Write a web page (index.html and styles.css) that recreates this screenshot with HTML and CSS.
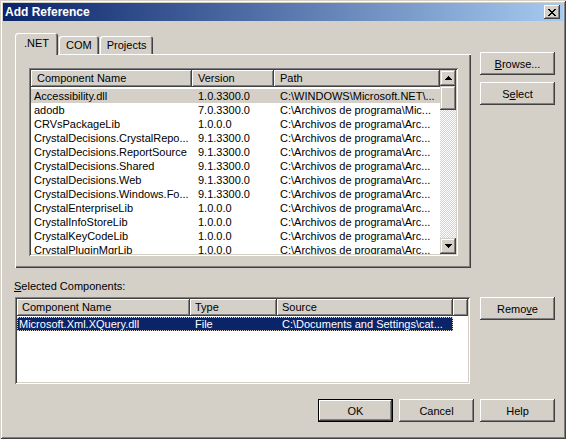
FILE: index.html
```html
<!DOCTYPE html>
<html lang="en">
<head>
    <meta charset="UTF-8">
    <title>Add Reference</title>
    <link rel="stylesheet" href="styles.css">
</head>
<body>
    <div class="window">
        <div class="titlebar">
            <span class="title">Add Reference</span>
            <span class="close-btn">
                <svg width="8" height="7" viewBox="0 0 8 7" shape-rendering="crispEdges">
                    <path d="M0 0h2v1h-2zM6 0h2v1h-2zM1 1h2v1h-2zM5 1h2v1h-2zM2 2h4v1h-4zM3 3h2v1h-2zM2 4h4v1h-4zM1 5h2v1h-2zM5 5h2v1h-2zM0 6h2v1h-2zM6 6h2v1h-2z" fill="#000"/>
                </svg>
            </span>
        </div>
        <div class="content">
            <div class="section">
                <div class="left">
                    <div class="tabs">
                        <div class="tab active">.NET</div>
                        <div class="tab">COM</div>
                        <div class="tab">Projects</div>
                    </div>
                    <div class="tab-panel">
                        <div class="listbox list-ref">
                            <div class="list-main">
                                <div class="list-header">
                                    <div class="col-h w-name">Component Name</div>
                                    <div class="col-h w-ver">Version</div>
                                    <div class="col-h w-path">Path</div>
                                </div>
                                <div class="list-rows">
                                    <div class="list-row hilite">
                                        <div class="cell w-name first">Accessibility.dll</div>
                                        <div class="cell w-ver">1.0.3300.0</div>
                                        <div class="cell w-path">C:\WINDOWS\Microsoft.NET\...</div>
                                    </div>
                                    <div class="list-row">
                                        <div class="cell w-name first">adodb</div>
                                        <div class="cell w-ver">7.0.3300.0</div>
                                        <div class="cell w-path">C:\Archivos de programa\Mic...</div>
                                    </div>
                                    <div class="list-row">
                                        <div class="cell w-name first">CRVsPackageLib</div>
                                        <div class="cell w-ver">1.0.0.0</div>
                                        <div class="cell w-path">C:\Archivos de programa\Arc...</div>
                                    </div>
                                    <div class="list-row">
                                        <div class="cell w-name first">CrystalDecisions.CrystalRepo...</div>
                                        <div class="cell w-ver">9.1.3300.0</div>
                                        <div class="cell w-path">C:\Archivos de programa\Arc...</div>
                                    </div>
                                    <div class="list-row">
                                        <div class="cell w-name first">CrystalDecisions.ReportSource</div>
                                        <div class="cell w-ver">9.1.3300.0</div>
                                        <div class="cell w-path">C:\Archivos de programa\Arc...</div>
                                    </div>
                                    <div class="list-row">
                                        <div class="cell w-name first">CrystalDecisions.Shared</div>
                                        <div class="cell w-ver">9.1.3300.0</div>
                                        <div class="cell w-path">C:\Archivos de programa\Arc...</div>
                                    </div>
                                    <div class="list-row">
                                        <div class="cell w-name first">CrystalDecisions.Web</div>
                                        <div class="cell w-ver">9.1.3300.0</div>
                                        <div class="cell w-path">C:\Archivos de programa\Arc...</div>
                                    </div>
                                    <div class="list-row">
                                        <div class="cell w-name first">CrystalDecisions.Windows.Fo...</div>
                                        <div class="cell w-ver">9.1.3300.0</div>
                                        <div class="cell w-path">C:\Archivos de programa\Arc...</div>
                                    </div>
                                    <div class="list-row">
                                        <div class="cell w-name first">CrystalEnterpriseLib</div>
                                        <div class="cell w-ver">1.0.0.0</div>
                                        <div class="cell w-path">C:\Archivos de programa\Arc...</div>
                                    </div>
                                    <div class="list-row">
                                        <div class="cell w-name first">CrystalInfoStoreLib</div>
                                        <div class="cell w-ver">1.0.0.0</div>
                                        <div class="cell w-path">C:\Archivos de programa\Arc...</div>
                                    </div>
                                    <div class="list-row">
                                        <div class="cell w-name first">CrystalKeyCodeLib</div>
                                        <div class="cell w-ver">1.0.0.0</div>
                                        <div class="cell w-path">C:\Archivos de programa\Arc...</div>
                                    </div>
                                    <div class="list-row">
                                        <div class="cell w-name first">CrystalPluginMgrLib</div>
                                        <div class="cell w-ver">1.0.0.0</div>
                                        <div class="cell w-path">C:\Archivos de programa\Arc...</div>
                                    </div>
                                </div>
                            </div>
                            <div class="vscroll">
                                <div class="sb-btn">
                                    <svg width="7" height="4" viewBox="0 0 7 4" shape-rendering="crispEdges"><path d="M3 0h1v1h1v1h1v1h1v1h-7v-1h1v-1h1v-1h1z" fill="#000"/></svg>
                                </div>
                                <div class="sb-thumb"></div>
                                <div class="sb-track"></div>
                                <div class="sb-btn">
                                    <svg width="7" height="4" viewBox="0 0 7 4" shape-rendering="crispEdges"><path d="M0 0h7v1h-1v1h-1v1h-1v1h-1v-1h-1v-1h-1v-1h-1z" fill="#000"/></svg>
                                </div>
                            </div>
                        </div>
                    </div>
                </div>
                <div class="side side-top">
                    <button class="btn"><u>B</u>rowse...</button>
                    <button class="btn">S<u>e</u>lect</button>
                </div>
            </div>

            <div class="section section-bottom">
                <div class="left">
                    <div class="field-label"><u>S</u>elected Components:</div>
                    <div class="listbox list-sel">
                        <div class="list-header">
                            <div class="col-h w-sname">Component Name</div>
                            <div class="col-h w-type">Type</div>
                            <div class="col-h w-src">Source</div>
                            <div class="col-h w-rest"></div>
                        </div>
                        <div class="list-row selected">
                            <div class="cell w-sname first">Microsoft.Xml.XQuery.dll</div>
                            <div class="cell w-type">File</div>
                            <div class="cell w-src">C:\Documents and Settings\cat...</div>
                        </div>
                    </div>
                </div>
                <div class="side side-bottom">
                    <button class="btn">Remo<u>v</u>e</button>
                </div>
            </div>

            <div class="footer">
                <button class="btn default">OK</button>
                <button class="btn">Cancel</button>
                <button class="btn">Help</button>
            </div>
        </div>
    </div>
</body>
</html>
```

FILE: styles.css
```css
body {
    margin: 0;
    background-color: #d4d0c8;
    font-family: "Liberation Sans", Arial, sans-serif;
    font-size: 11px;
    color: #000;
}
.window {
    width: 566px;
    height: 439px;
    box-sizing: border-box;
    padding: 3px;
    background: #d4d0c8;
    box-shadow: inset 1px 1px #d4d0c8, inset -1px -1px #404040, inset 2px 2px #fff, inset -2px -2px #808080;
}
.titlebar {
    height: 18px;
    display: flex;
    align-items: center;
    justify-content: space-between;
    padding: 0 3px 0 2px;
    background: linear-gradient(to right, #0a246a, #a6caf0);
    color: #fff;
}
.title {
    font-weight: bold;
    font-size: 12px;
}
.close-btn {
    width: 16px;
    height: 14px;
    box-sizing: border-box;
    display: flex;
    align-items: center;
    justify-content: center;
    background: #d4d0c8;
    box-shadow: inset -1px -1px #404040, inset 1px 1px #fff, inset -2px -2px #808080;
}
.content {
    padding: 12px 8px 0 12px;
}
.section {
    display: flex;
    gap: 9px;
}
.left {
    width: 456px;
}
.side {
    width: 75px;
    display: flex;
    flex-direction: column;
    gap: 7px;
}
.side-top {
    padding-top: 19px;
}
.side-bottom {
    padding-top: 18px;
}

/* tabs */
.tabs {
    display: flex;
    align-items: flex-end;
    height: 21px;
}
.tab {
    height: 18px;
    line-height: 18px;
    padding: 0 7px;
    box-sizing: border-box;
    border-radius: 3px 3px 0 0;
    background: #d4d0c8;
    box-shadow: inset 1px 1px #fff, inset -1px 0 #404040, inset -2px 0 #808080;
}
.tab + .tab {
    margin-left: 1px;
}
.tab.active {
    height: 22px;
    line-height: 21px;
    padding: 0 9px;
    margin-bottom: -1px;
    position: relative;
    z-index: 1;
}
.tab-panel {
    height: 214px;
    box-sizing: border-box;
    padding: 14px;
    box-shadow: inset 1px 1px #fff, inset -1px -1px #404040, inset -2px -2px #808080;
}

/* list views */
.listbox {
    box-sizing: border-box;
    padding: 2px;
    background: #fff;
    box-shadow: inset 1px 1px #808080, inset -1px -1px #fff, inset 2px 2px #404040, inset -2px -2px #d4d0c8;
}
.list-ref {
    width: 429px;
    height: 188px;
    display: flex;
}
.list-main {
    flex: 1;
    overflow: hidden;
}
.list-header {
    display: flex;
    height: 17px;
}
.col-h {
    box-sizing: border-box;
    height: 17px;
    line-height: 16px;
    padding-left: 6px;
    white-space: nowrap;
    overflow: hidden;
    background: #d4d0c8;
    box-shadow: inset -1px -1px #404040, inset 1px 1px #fff, inset -2px -2px #808080;
}
.list-rows {
    padding-top: 2px;
}
.list-row {
    display: flex;
    height: 14px;
    line-height: 14px;
}
.list-row.hilite {
    background: #d4d0c8;
}
.cell {
    box-sizing: border-box;
    padding-left: 6px;
    white-space: nowrap;
    overflow: hidden;
}
.cell.first {
    padding-left: 3px;
}
.w-name { width: 161px; }
.w-ver { width: 82px; }
.w-path { width: 166px; }

.vscroll {
    width: 16px;
    display: flex;
    flex-direction: column;
    background: #d4d0c8;
}
.sb-btn, .sb-thumb {
    flex: none;
    box-sizing: border-box;
    background: #d4d0c8;
    box-shadow: inset -1px -1px #404040, inset 1px 1px #d4d0c8, inset -2px -2px #808080, inset 2px 2px #fff;
}
.sb-btn {
    height: 16px;
    display: flex;
    align-items: center;
    justify-content: center;
}
.sb-thumb {
    height: 24px;
}
.sb-track {
    flex: 1;
    background: repeating-conic-gradient(#d4d0c8 0 25%, #fff 0 50%) 0 0 / 2px 2px;
}

/* selected components */
.section-bottom {
    margin-top: 11px;
}
.field-label {
    line-height: 14px;
    padding-left: 0;
    margin-left: -1px;
}
.list-sel {
    width: 455px;
    height: 87px;
    margin-top: 4px;
}
.list-sel .list-row {
    margin-top: 1px;
}
.w-sname { width: 173px; }
.w-type { width: 87px; }
.w-src { width: 176px; }
.w-rest { flex: 1; }
.list-sel .col-h {
    padding-left: 5px;
}
.list-row.selected {
    width: 436px;
    background: #0a246a;
    color: #fff;
    outline: 1px dotted #d4d0c8;
    outline-offset: -1px;
}
.list-row.selected .cell {
    padding-left: 5px;
}
.list-row.selected .cell.first {
    padding-left: 2px;
}

/* buttons */
.btn {
    width: 75px;
    height: 23px;
    padding: 0;
    border: none;
    background: #d4d0c8;
    font-family: "Liberation Sans", Arial, sans-serif;
    font-size: 11px;
    color: #000;
    box-shadow: inset -1px -1px #404040, inset 1px 1px #fff, inset -2px -2px #808080, inset 2px 2px #d4d0c8;
}
.btn.default {
    border: 1px solid #000;
}
.footer {
    display: flex;
    justify-content: flex-end;
    gap: 6px;
    margin-top: 15px;
}
```
